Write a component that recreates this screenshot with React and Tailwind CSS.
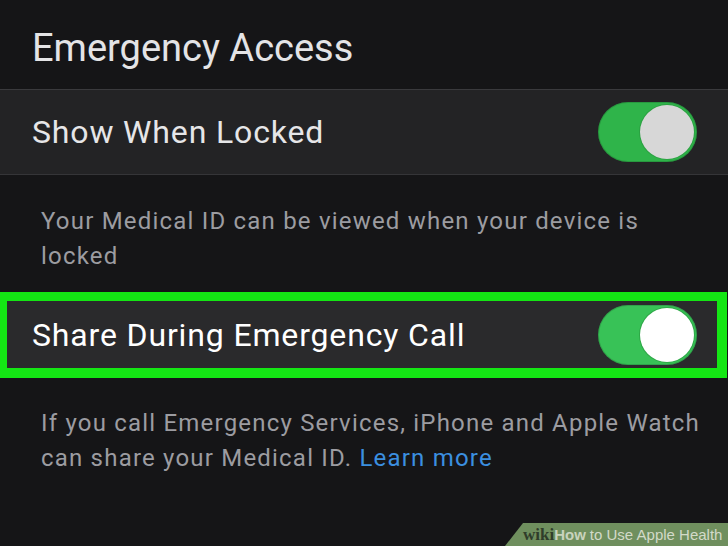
export default function App() {
  return (
    <div className="relative w-[728px] h-[546px] overflow-hidden bg-[#151517] font-['Roboto','Liberation_Sans',sans-serif]">
      {/* section header */}
      <div className="h-[89px] pl-[32px] pt-[29px] text-[38px] leading-none text-[#e4e4e6]">
        Emergency Access
      </div>
      <div className="h-px bg-[#3a3a3d]" />

      <div className="h-[84px] bg-[#232325] flex items-center justify-between pl-[32px] pr-[31px]">
        <span className="text-[32px] leading-none tracking-[0.85px] text-[#e6e6e8]">Show When Locked</span>
        <Toggle knob="bg-[#d7d7d7]" track="bg-[#2fb44a]" />
      </div>
      <div className="h-px bg-[#353538]" />

      <p className="pt-[29px] pl-[41px] pr-[20px] text-[24px] leading-[35px] tracking-[1.2px] text-[#9c9ca1]">
        Your Medical ID can be viewed when your device is locked
      </p>

      {/* highlighted row */}
      <div className="mt-[18px] mr-px h-[86px] border-[#14e614] border-t-[9px] border-b-[10px] border-l-[7px] border-r-[10px] bg-[#2a2a2c] flex items-center justify-between pl-[25px] pr-[20px]">
        <span className="text-[32px] leading-none tracking-[0.85px] text-white">Share During Emergency Call</span>
        <Toggle knob="bg-white" track="bg-[#38c257]" />
      </div>

      <p className="pt-[28px] pl-[41px] pr-[16px] text-[24px] leading-[35px] tracking-[1.2px] text-[#9c9ca1]">
        If you call Emergency Services, iPhone and Apple Watch can share your Medical ID.{' '}
        <span className="text-[#3b8fe0]">Learn more</span>
      </p>

      {/* watermark */}
      <div className="absolute right-0 bottom-0 w-[223px] h-[23px] bg-[#6f8f5e] [clip-path:polygon(18px_0,100%_0,100%_100%,0_100%)] flex items-center pl-[18px] leading-none whitespace-nowrap">
        <span className="font-['Liberation_Serif',serif] font-bold text-[#2f3d2a] text-[17px]">wiki</span>
        <span className="font-['Liberation_Sans',sans-serif] font-bold text-[#c9d3bd] text-[15px]">How</span>
        <span className="font-['Liberation_Sans',sans-serif] text-[#d3dac9] text-[15px] ml-[4px]">to Use Apple Health</span>
      </div>
    </div>
  );
}

function Toggle({ knob, track }) {
  return (
    <div className={`w-[99px] h-[60px] rounded-full ${track} flex items-center justify-end pr-[3px] shadow-[inset_0_0_0_1px_rgba(0,0,0,0.15)]`}>
      <div className={`w-[54px] h-[54px] rounded-full ${knob} shadow-[0_0_0_1px_rgba(40,150,60,0.6)]`} />
    </div>
  );
}
